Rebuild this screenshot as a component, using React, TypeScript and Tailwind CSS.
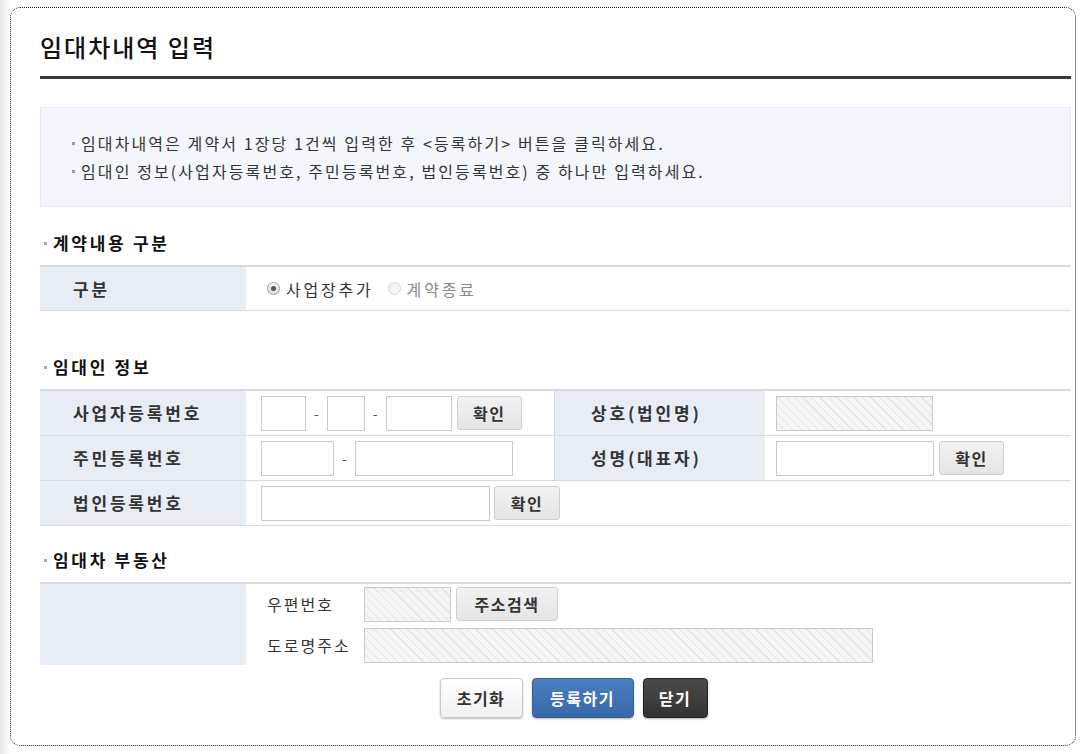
import React from "react"

const font = { fontFamily: '"Noto Sans CJK KR", "Noto Sans", sans-serif' }

const hatch =
  "border border-[#c9c9c9] bg-[#f5f5f5] bg-[repeating-linear-gradient(45deg,#f5f5f5_0px,#f5f5f5_5px,#e3e3e3_5px,#e3e3e3_6px)]"

function Input({ w, disabled }: { w: string; disabled?: boolean }) {
  return (
    <div
      className={`h-[35px] ${w} ${disabled ? hatch : "border border-[#c9c9c9] bg-white"}`}
    />
  )
}

function CheckBtn({ label = "확인", w = "w-[65px]" }: { label?: string; w?: string }) {
  return (
    <button className={`h-[34px] ${w} rounded-[3px] border border-[#cfcfcf] bg-[linear-gradient(#f2f2f2,#e4e4e4)] text-[16px] font-bold tracking-[1.5px] text-[#333]`}>
      {label}
    </button>
  )
}

function Dash() {
  return <span className="mx-[8px] text-[14px] text-[#555]">-</span>
}

function SectionTitle({ children, className }: { children: React.ReactNode; className: string }) {
  return (
    <div className={`flex items-center pb-[11px] ${className}`}>
      <span className="ml-[4px] mr-[6px] h-[3px] w-[3px] bg-[#aaa]" />
      <span className="text-[17px] font-bold leading-[22px] tracking-[2.7px] text-[#111]">{children}</span>
    </div>
  )
}

function Label({ children }: { children: React.ReactNode }) {
  return (
    <div className="flex items-center bg-[#e8edf5] pl-[33px] text-[17px] font-bold tracking-[2.8px] text-[#333]">
      {children}
    </div>
  )
}

function Radio({ checked, disabled }: { checked?: boolean; disabled?: boolean }) {
  return (
    <span className={`flex h-[13px] w-[13px] items-center justify-center rounded-full border ${disabled ? "border-[#d8d8d8] bg-[#f4f4f4]" : "border-[#9a9a9a] bg-[linear-gradient(#f6f6f6,#dcdcdc)]"}`}>
      {checked && <span className="h-[5px] w-[5px] rounded-full bg-[#555]" />}
    </span>
  )
}

export default function App() {
  return (
    <div
      style={font}
      className="h-[754px] w-[1088px] overflow-hidden bg-[linear-gradient(to_right,#e6e6e6,#ffffff_10px)] pl-[10px] pt-[7px]"
    >
      <div className="h-[739px] w-[1066px] rounded-[10px] border border-dotted border-[#222] bg-white pl-[29px] pr-[4px]">
        {/* header */}
        <div className="h-[71px] border-b-[3px] border-[#3a3a3a] pt-[24px]">
          <h1 className="text-[24px] font-medium leading-[30px] tracking-[2px] text-[#111]">임대차내역 입력</h1>
        </div>

        {/* notice */}
        <div className="mt-[28px] h-[100px] border border-[#e6ebf1] bg-[#f3f7fb] pl-[31px] pt-[21px] text-[16px] leading-[28px] tracking-[2.1px] text-[#333]">
          <p className="flex items-center">
            <span className="mr-[6px] h-[3px] w-[3px] bg-[#999]" />
            임대차내역은 계약서 1장당 1건씩 입력한 후 &lt;등록하기&gt; 버튼을 클릭하세요.
          </p>
          <p className="flex items-center">
            <span className="mr-[6px] h-[3px] w-[3px] bg-[#999]" />
            임대인 정보(사업자등록번호, 주민등록번호, 법인등록번호) 중 하나만 입력하세요.
          </p>
        </div>

        {/* 계약내용 구분 */}
        <SectionTitle className="pt-[25px]">계약내용 구분</SectionTitle>
        <div className="grid h-[46px] grid-cols-[206px_1fr] border-t-2 border-b border-[#d3dbe6]">
          <Label>구분</Label>
          <div className="flex items-center gap-[6px] pl-[21px] text-[16px] tracking-[2.8px]">
            <Radio checked />
            <span className="text-[#333]">사업장추가</span>
            <span className="ml-[8px]">
              <Radio disabled />
            </span>
            <span className="text-[#888]">계약종료</span>
          </div>
        </div>

        {/* 임대인 정보 */}
        <SectionTitle className="pt-[45px]">임대인 정보</SectionTitle>
        <div className="grid grid-cols-[206px_309px_210px_1fr] border-t-2 border-[#d3dbe6]">
          <div className="col-span-4 grid h-[45px] grid-cols-subgrid border-b border-[#d3dbe6]">
            <Label>사업자등록번호</Label>
            <div className="flex items-center border-r border-[#d3dbe6] pl-[15px]">
              <Input w="w-[45px]" />
              <Dash />
              <Input w="w-[38px]" />
              <Dash />
              <Input w="w-[66px]" />
              <span className="ml-[5px]"><CheckBtn /></span>
            </div>
            <Label>
              <span className="pl-[3px]">상호(법인명)</span>
            </Label>
            <div className="flex items-center pl-[11px]">
              <Input w="w-[157px]" disabled />
            </div>
          </div>
          <div className="col-span-4 grid h-[45px] grid-cols-subgrid border-b border-[#d3dbe6]">
            <Label>주민등록번호</Label>
            <div className="flex items-center border-r border-[#d3dbe6] pl-[15px]">
              <Input w="w-[73px]" />
              <Dash />
              <Input w="w-[158px]" />
            </div>
            <Label>
              <span className="pl-[3px]">성명(대표자)</span>
            </Label>
            <div className="flex items-center pl-[11px]">
              <Input w="w-[158px]" />
              <span className="ml-[5px]"><CheckBtn /></span>
            </div>
          </div>
          <div className="col-span-4 grid h-[45px] grid-cols-subgrid border-b border-[#d3dbe6]">
            <Label>법인등록번호</Label>
            <div className="col-span-3 flex items-center pl-[15px]">
              <Input w="w-[229px]" />
              <span className="ml-[4px]"><CheckBtn w="w-[66px]" /></span>
            </div>
          </div>
        </div>

        {/* 임대차 부동산 */}
        <SectionTitle className="pt-[23px]">임대차 부동산</SectionTitle>
        <div className="grid h-[83px] grid-cols-[206px_1fr] border-t-2 border-[#d3dbe6]">
          <div className="bg-[#e8edf5]" />
          <div className="flex flex-col justify-center gap-[6px] pl-[21px] text-[16px] tracking-[2px] text-[#333]">
            <div className="flex items-center">
              <span className="w-[97px]">우편번호</span>
              <Input w="w-[87px]" disabled />
              <span className="ml-[5px]"><CheckBtn label="주소검색" w="w-[102px]" /></span>
            </div>
            <div className="flex items-center">
              <span className="w-[97px]">도로명주소</span>
              <Input w="w-[509px]" disabled />
            </div>
          </div>
        </div>

        {/* buttons */}
        <div className="mt-[13px] flex justify-center gap-[9px] pl-[36px]">
          <button className="h-[40px] w-[83px] rounded-[4px] border border-[#c8c8c8] bg-[linear-gradient(#ffffff,#f0f0f0)] text-[16px] font-bold tracking-[1.5px] text-[#333] shadow-[0_1px_2px_rgba(0,0,0,0.25)]">
            초기화
          </button>
          <button className="h-[40px] w-[102px] rounded-[4px] border border-[#2f5e99] bg-[linear-gradient(#4a7fc0,#3868a8)] text-[16px] font-bold tracking-[1.5px] text-white shadow-[0_1px_2px_rgba(0,0,0,0.3)]">
            등록하기
          </button>
          <button className="h-[40px] w-[65px] rounded-[4px] border border-[#222] bg-[linear-gradient(#4a4a4a,#333)] text-[16px] font-bold tracking-[1.5px] text-white shadow-[0_1px_2px_rgba(0,0,0,0.3)]">
            닫기
          </button>
        </div>
      </div>
    </div>
  )
}
